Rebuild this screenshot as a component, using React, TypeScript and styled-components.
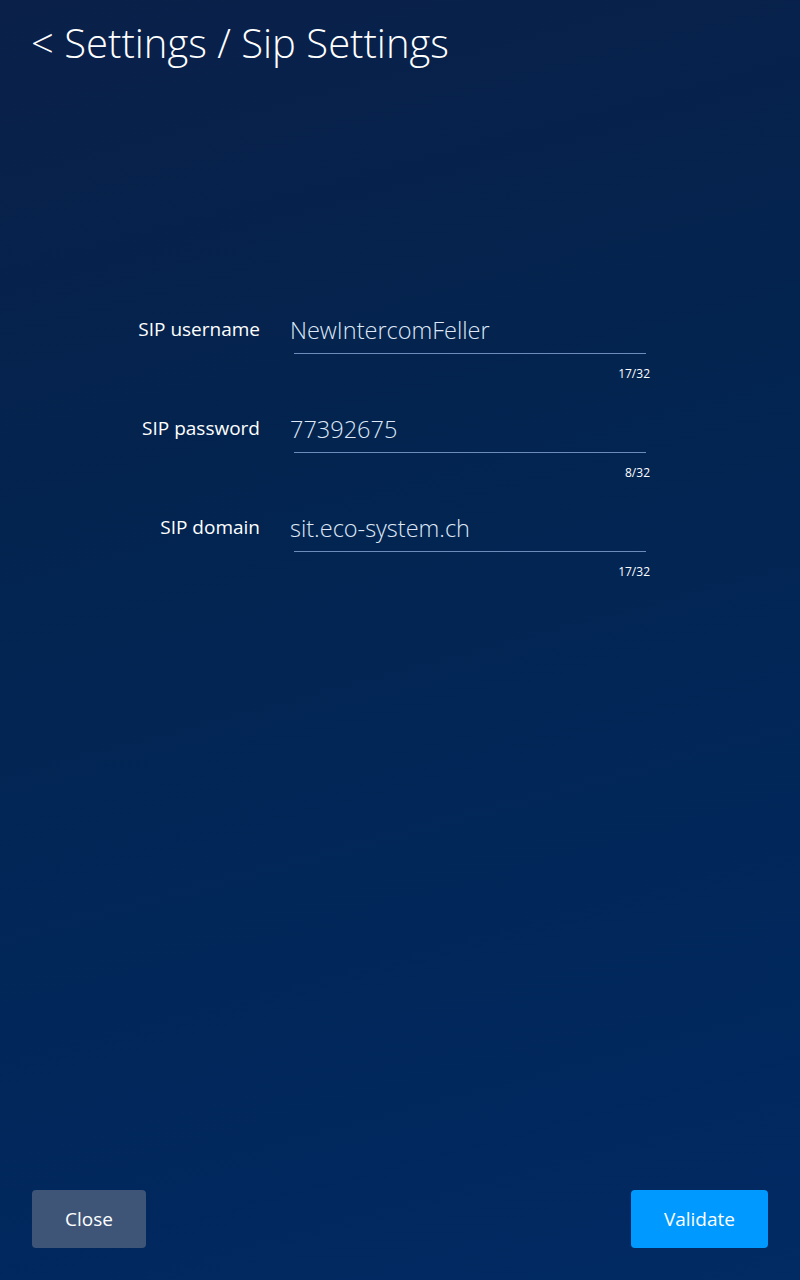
import React from "react";
import styled, { createGlobalStyle } from "styled-components";

const GlobalStyle = createGlobalStyle`
  html, body {
    margin: 0;
    padding: 0;
  }
  body {
    font-family: "Open Sans", "Noto Sans", sans-serif;
    background: #012553;
  }
  * { box-sizing: border-box; }
`;

const Page = styled.div`
  min-height: 100vh;
  height: 1280px;
  display: flex;
  flex-direction: column;
  background: linear-gradient(165deg, #0a2049 0%, #03244f 35%, #01275a 70%, #022a63 100%);
  color: #ffffff;
`;

const Header = styled.header`
  padding: 15px 0 0 31px;
`;

const Title = styled.h1`
  margin: 0;
  font-family: "Open Sans", sans-serif;
  font-weight: 300;
  font-size: 40px;
  line-height: 55px;
  color: #ffffff;
  letter-spacing: 0;
`;

const Form = styled.main`
  margin-top: 244px;
  display: flex;
  flex-direction: column;
  gap: 32px;
  flex: 1;
`;

const Row = styled.div`
  display: grid;
  grid-template-columns: 260px 360px;
  column-gap: 30px;
`;

const Label = styled.label`
  text-align: right;
  font-size: 19px;
  line-height: 30px;
  font-weight: 400;
  color: #ffffff;
`;

const Field = styled.div`
  display: flex;
  flex-direction: column;
`;

const Value = styled.div`
  font-size: 23.5px;
  font-weight: 300;
  line-height: 32px;
  color: #dfe8f6;
  padding-bottom: 7px;
`;

const Underline = styled.div`
  height: 1px;
  margin: 0 4px;
  background: #6d8cbc;
`;

const Counter = styled.div`
  margin-top: 12px;
  text-align: right;
  font-size: 12px;
  line-height: 15px;
  color: #ffffff;
`;

const Footer = styled.footer`
  display: flex;
  justify-content: space-between;
  padding: 0 32px 32px 32px;
`;

const Button = styled.button<{ $primary?: boolean }>`
  height: 58px;
  padding: 0 33px;
  border: none;
  border-radius: 4px;
  font-family: "Open Sans", sans-serif;
  font-size: 19px;
  font-weight: 400;
  color: #ffffff;
  background: ${(p) => (p.$primary ? "#0099ff" : "#3e5578")};
  cursor: pointer;
`;

const fields = [
  { label: "SIP username", value: "NewIntercomFeller", max: 32 },
  { label: "SIP password", value: "77392675", max: 32 },
  { label: "SIP domain", value: "sit.eco-system.ch", max: 32 },
];

export default function App() {
  return (
    <>
      <GlobalStyle />
      <Page>
        <Header>
          <Title>&lt; Settings / Sip Settings</Title>
        </Header>
        <Form>
          {fields.map((f) => (
            <Row key={f.label}>
              <Label>{f.label}</Label>
              <Field>
                <Value>{f.value}</Value>
                <Underline />
                <Counter>
                  {f.value.length}/{f.max}
                </Counter>
              </Field>
            </Row>
          ))}
        </Form>
        <Footer>
          <Button>Close</Button>
          <Button $primary>Validate</Button>
        </Footer>
      </Page>
    </>
  );
}
